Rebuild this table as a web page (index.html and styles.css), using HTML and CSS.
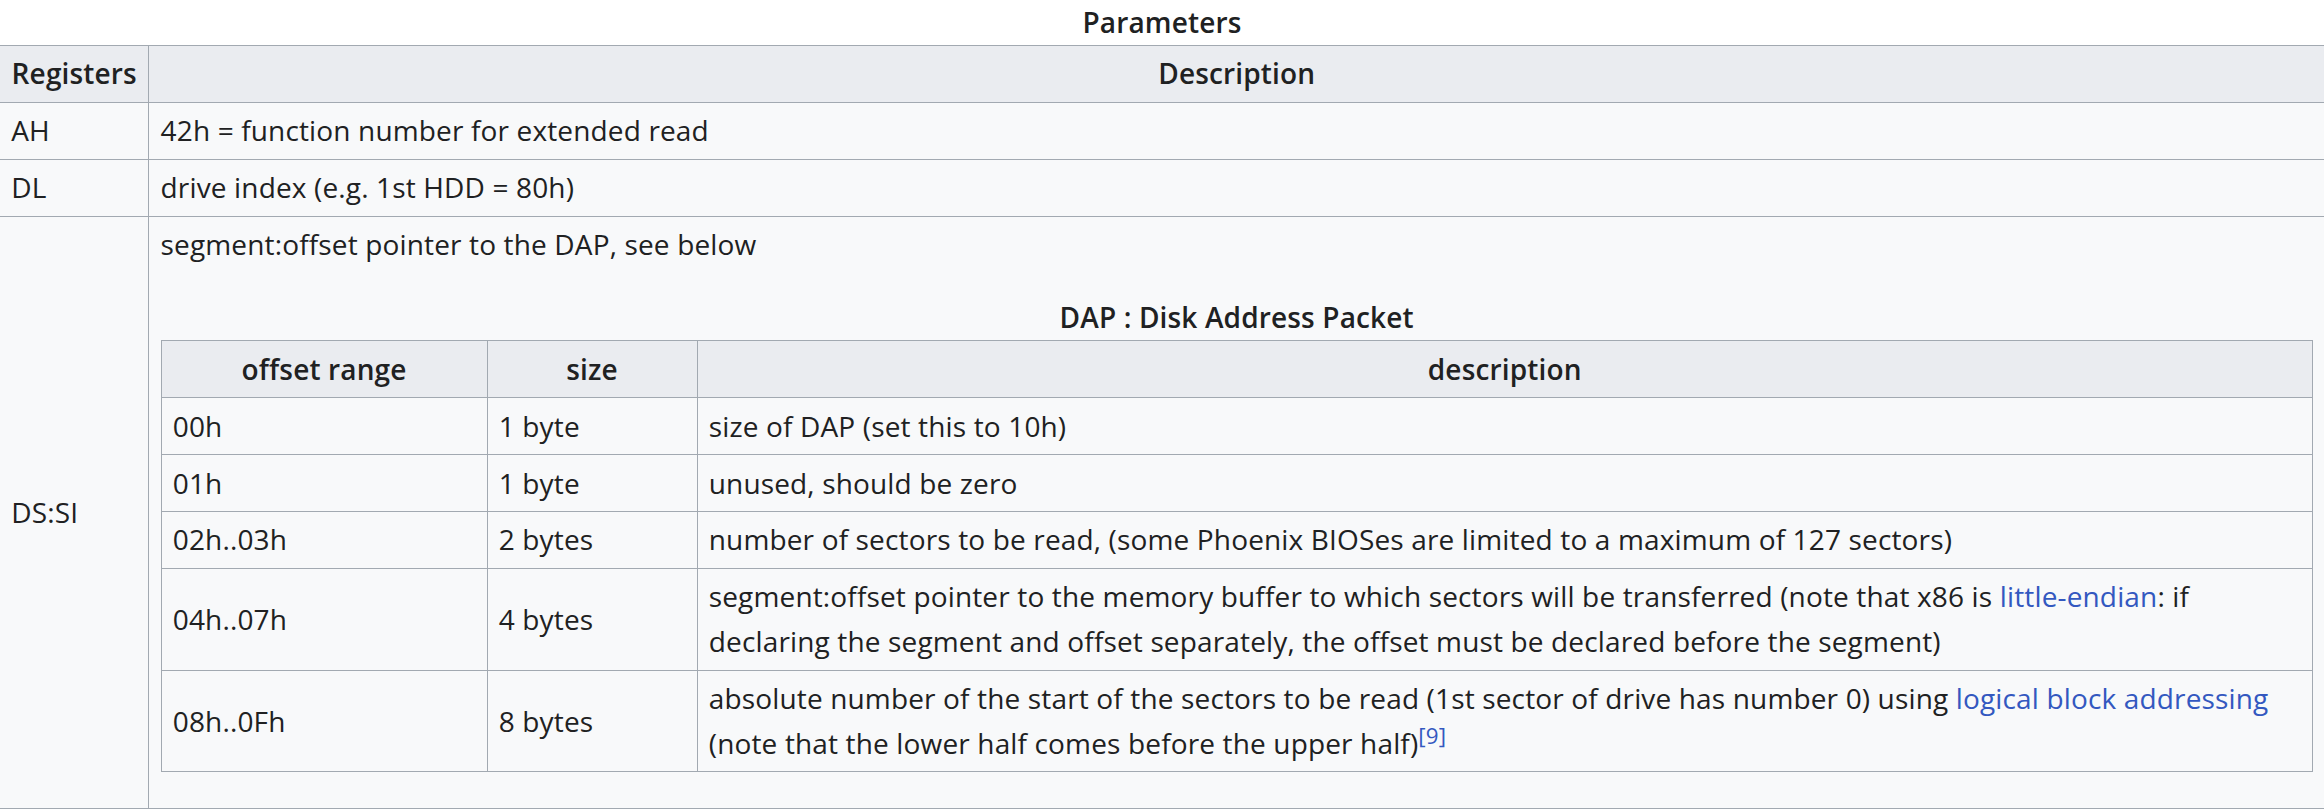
FILE: index.html
```html
<!DOCTYPE html>
<html lang="en">
<head>
<meta charset="utf-8">
<title>Parameters</title>
<link rel="stylesheet" href="styles.css">
</head>
<body>
<table class="wikitable params">
  <caption>Parameters</caption>
  <tr>
    <th class="reg-col">Registers</th>
    <th>Description</th>
  </tr>
  <tr>
    <td>AH</td>
    <td>42h = function number for extended read</td>
  </tr>
  <tr>
    <td>DL</td>
    <td>drive index (e.g. 1st HDD = 80h)</td>
  </tr>
  <tr>
    <td>DS:SI</td>
    <td>segment:offset pointer to the DAP, see below
      <table class="wikitable dap">
        <caption>DAP : Disk Address Packet</caption>
        <tr>
          <th class="col-offset">offset range</th>
          <th class="col-size">size</th>
          <th>description</th>
        </tr>
        <tr>
          <td>00h</td>
          <td>1 byte</td>
          <td>size of DAP (set this to 10h)</td>
        </tr>
        <tr>
          <td>01h</td>
          <td>1 byte</td>
          <td>unused, should be zero</td>
        </tr>
        <tr>
          <td>02h..03h</td>
          <td>2 bytes</td>
          <td>number of sectors to be read, (some Phoenix BIOSes are limited to a maximum of 127 sectors)</td>
        </tr>
        <tr>
          <td>04h..07h</td>
          <td>4 bytes</td>
          <td>segment:offset pointer to the memory buffer to which sectors will be transferred (note that x86 is <a href="#">little-endian</a>: if declaring the segment and offset separately, the offset must be declared before the segment)</td>
        </tr>
        <tr>
          <td>08h..0Fh</td>
          <td>8 bytes</td>
          <td>absolute number of the start of the sectors to be read (1st sector of drive has number 0) using <a href="#">logical block addressing</a> (note that the lower half comes before the upper half)<sup class="reference"><a href="#">[9]</a></sup></td>
        </tr>
      </table>
    </td>
  </tr>
</table>
</body>
</html>
```
FILE: styles.css
```css
html, body {
  margin: 0;
  padding: 0;
  background: #ffffff;
}

body {
  font-family: "Open Sans", "Noto Sans", sans-serif;
  font-size: 28px;
  line-height: 1.6;
  letter-spacing: 0.15px;
  color: #202122;
  overflow: hidden;
}

.wikitable {
  border-collapse: collapse;
  background: #f8f9fa;
  color: #202122;
  border: 1px solid #a2a9b1;
}

.wikitable > caption {
  font-weight: 600;
  text-align: center;
  background: #ffffff;
}

.wikitable th,
.wikitable td {
  border: 1px solid #a2a9b1;
  padding: 0.2em 0.4em;
}

.wikitable th {
  background: #eaecf0;
  font-weight: 600;
  text-align: center;
}

.wikitable td {
  text-align: left;
  vertical-align: middle;
}

.params {
  width: calc(100% + 2px);
  margin: 0 0 0 -1px;
}

.params .reg-col {
  width: 126px;
  white-space: nowrap;
}

.dap {
  width: 100%;
  margin: 28px 0 30px;
}

.dap > caption {
  background: transparent;
}

.dap .col-offset {
  box-sizing: border-box;
  width: 326px;
}

.dap .col-size {
  box-sizing: border-box;
  width: 210px;
}

a {
  color: #3358c0;
  text-decoration: none;
}

sup.reference {
  font-size: 0.8em;
  line-height: 1;
  vertical-align: super;
  white-space: nowrap;
}
```
